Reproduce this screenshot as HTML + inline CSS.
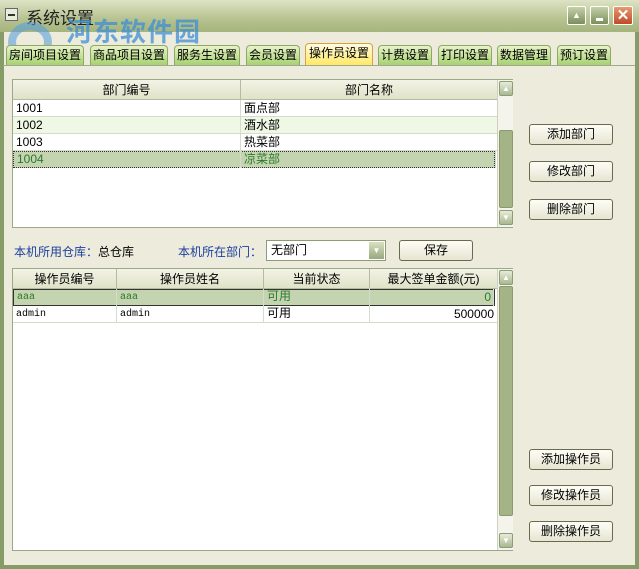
<!DOCTYPE html>
<html><head><meta charset="utf-8"><style>
*{box-sizing:border-box;margin:0;padding:0}
body{width:639px;height:569px;overflow:hidden;background:#7e9460;font-family:"Liberation Sans","Noto Sans CJK SC",sans-serif;font-size:12px;color:#000;position:relative}
.win{position:absolute;left:0;top:0;width:639px;height:569px;background:#edebdc;border:4px solid #869c66;border-top:none}
.title{position:absolute;left:0;top:0;width:639px;height:32px;background:linear-gradient(#dde3c5,#b6c290 60%,#a5b47c)}
.a{position:absolute}
.tab{position:absolute;top:45px;height:20px;background:linear-gradient(#e8f3c8,#a6d272);border:1px solid #8ea86a;border-bottom:none;border-radius:4px 4px 0 0;font-size:12px;line-height:19px;text-align:center}
.grid{position:absolute;background:#fff;border:1px solid #9aa98a}
.hd{position:absolute;height:20px;background:linear-gradient(#f3f3e6,#dfe3c8);border-right:1px solid #b6ba9e;border-bottom:1px solid #b6ba9e;text-align:center;line-height:20px;font-size:12px}
.row{position:absolute;left:0;height:17px;line-height:17px;border-bottom:1px solid #d6dccb}
.c{position:absolute;top:0;height:17px;padding-left:3px;border-right:1px solid #d6dccb;white-space:nowrap}
.mono{font-family:"Liberation Mono",monospace;font-size:10px}
.sb{position:absolute;width:16px;background:#f4f3ec;border-left:1px solid #d0d0c0}
.sbb{position:absolute;left:1px;width:14px;height:15px;background:linear-gradient(#e8ecd8,#a8b890);border:1px solid #8c9c74;border-radius:2px;color:#fff;font-size:8px;text-align:center;line-height:13px}
.thumb{position:absolute;left:1px;width:14px;background:#a4b486;border:1px solid #8a9a6c;border-radius:2px}
.btn{position:absolute;left:529px;width:84px;height:21px;background:linear-gradient(#fdfdf6,#e6e5d2);border:1px solid #6a6a50;border-radius:3px;text-align:center;line-height:19px;font-size:12px}
.lbl{color:#1b3ea0}
</style></head><body>
<div class="win"></div>
<div class="title"></div>
<div class="a" style="left:5px;top:8px;width:13px;height:13px;background:#e8ecd8;border:1px solid #667;"></div>
<div class="a" style="left:8px;top:14px;width:7px;height:2px;background:#333"></div>
<div class="a" style="left:26px;top:4px;font-size:17px;color:#222">系统设置</div>
<div class="a" style="left:66px;top:12px;font-size:26px;font-weight:bold;color:#3d8fd6;opacity:.75;letter-spacing:1px">河东软件园</div>
<div class="a" style="left:8px;top:22px;width:44px;height:40px;border-radius:50%;border:8px solid #5aa0dc;opacity:.6"></div>
<div class="a" style="left:567px;top:6px;width:19px;height:19px;background:linear-gradient(#c6d0a8,#7b8f5c);border:1px solid #fff;border-radius:2px;color:#fff;font-size:9px;text-align:center;line-height:17px">▲</div>
<div class="a" style="left:590px;top:6px;width:19px;height:19px;background:linear-gradient(#c6d0a8,#7b8f5c);border:1px solid #fff;border-radius:2px"><div class="a" style="left:5px;top:11px;width:7px;height:3px;background:#fff"></div></div>
<div class="a" style="left:613px;top:6px;width:20px;height:19px;background:linear-gradient(#e89870,#c04a28);border:1px solid #fff;border-radius:2px;color:#fff;font-size:15px;font-weight:bold;text-align:center;line-height:17px">✕</div>

<div class="tab" style="left:6px;width:78px">房间项目设置</div>
<div class="tab" style="left:90px;width:78px">商品项目设置</div>
<div class="tab" style="left:174px;width:66px">服务生设置</div>
<div class="tab" style="left:246px;width:54px">会员设置</div>
<div class="tab" style="left:305px;width:68px;top:43px;height:23px;background:linear-gradient(#fffbe0,#ffe860);border-color:#d8a040">操作员设置</div>
<div class="tab" style="left:378px;width:54px">计费设置</div>
<div class="tab" style="left:438px;width:54px">打印设置</div>
<div class="tab" style="left:497px;width:54px">数据管理</div>
<div class="tab" style="left:557px;width:54px">预订设置</div>
<div class="a" style="left:3px;top:65px;width:632px;height:1px;background:#a0a890"></div>

<div class="grid" style="left:12px;top:79px;width:501px;height:149px">
<div class="hd" style="left:0;top:0;width:228px">部门编号</div>
<div class="hd" style="left:228px;top:0;width:257px">部门名称</div>
<div class="row" style="top:20px;width:485px"><div class="c" style="left:0;width:228px">1001</div><div class="c" style="left:228px;width:257px">面点部</div></div>
<div class="row" style="top:37px;width:485px;background:#eef8e4"><div class="c" style="left:0;width:228px">1002</div><div class="c" style="left:228px;width:257px">酒水部</div></div>
<div class="row" style="top:54px;width:485px"><div class="c" style="left:0;width:228px">1003</div><div class="c" style="left:228px;width:257px">热菜部</div></div>
<div class="row" style="top:71px;width:482px;background:#c4d4b0;color:#2a7a2a;border:1px dotted #333"><div class="c" style="left:0;width:227px;top:-1px">1004</div><div class="c" style="left:227px;width:255px;top:-1px">凉菜部</div></div>
<div class="sb" style="left:484px;top:0;height:147px"><div class="sbb" style="top:1px">▲</div><div class="thumb" style="top:50px;height:78px"></div><div class="sbb" style="top:130px">▼</div></div>
</div>

<div class="a lbl" style="left:14px;top:243px">本机所用仓库：<span style="color:#000">总仓库</span></div>
<div class="a lbl" style="left:178px;top:243px">本机所在部门：</div>
<div class="a" style="left:266px;top:240px;width:120px;height:21px;background:#fff;border:1px solid #8c9c74;padding-left:4px;line-height:19px">无部门<div class="a" style="right:1px;top:1px;width:15px;height:17px;background:linear-gradient(#d8e0c0,#98a880);color:#fff;font-size:8px;text-align:center;line-height:17px">▼</div></div>
<div class="a btn" style="left:399px;top:240px;width:74px">保存</div>

<div class="grid" style="left:12px;top:268px;width:501px;height:283px">
<div class="hd" style="left:0;top:0;width:104px">操作员编号</div>
<div class="hd" style="left:104px;top:0;width:147px">操作员姓名</div>
<div class="hd" style="left:251px;top:0;width:106px">当前状态</div>
<div class="hd" style="left:357px;top:0;width:128px">最大签单金额(元)</div>
<div class="row" style="top:20px;width:482px;background:#c4d4b0;color:#2a7a2a;border:1px solid #333"><div class="c mono" style="left:0;width:103px;top:-1px">aaa</div><div class="c mono" style="left:103px;width:147px;top:-1px">aaa</div><div class="c" style="left:250px;width:106px;top:-2px">可用</div><div class="c" style="left:356px;width:124px;top:-1px;text-align:right;padding-right:2px">0</div></div>
<div class="row" style="top:37px;width:485px"><div class="c mono" style="left:0;width:104px">admin</div><div class="c mono" style="left:104px;width:147px">admin</div><div class="c" style="left:251px;width:106px;top:-1px">可用</div><div class="c" style="left:357px;width:128px;text-align:right;padding-right:3px">500000</div></div>
<div class="sb" style="left:484px;top:0;height:281px"><div class="sbb" style="top:1px">▲</div><div class="thumb" style="top:17px;height:230px"></div><div class="sbb" style="top:264px">▼</div></div>
</div>

<div class="btn" style="top:124px">添加部门</div>
<div class="btn" style="top:161px">修改部门</div>
<div class="btn" style="top:199px">删除部门</div>
<div class="btn" style="top:449px">添加操作员</div>
<div class="btn" style="top:485px">修改操作员</div>
<div class="btn" style="top:521px">删除操作员</div>
</body></html>
